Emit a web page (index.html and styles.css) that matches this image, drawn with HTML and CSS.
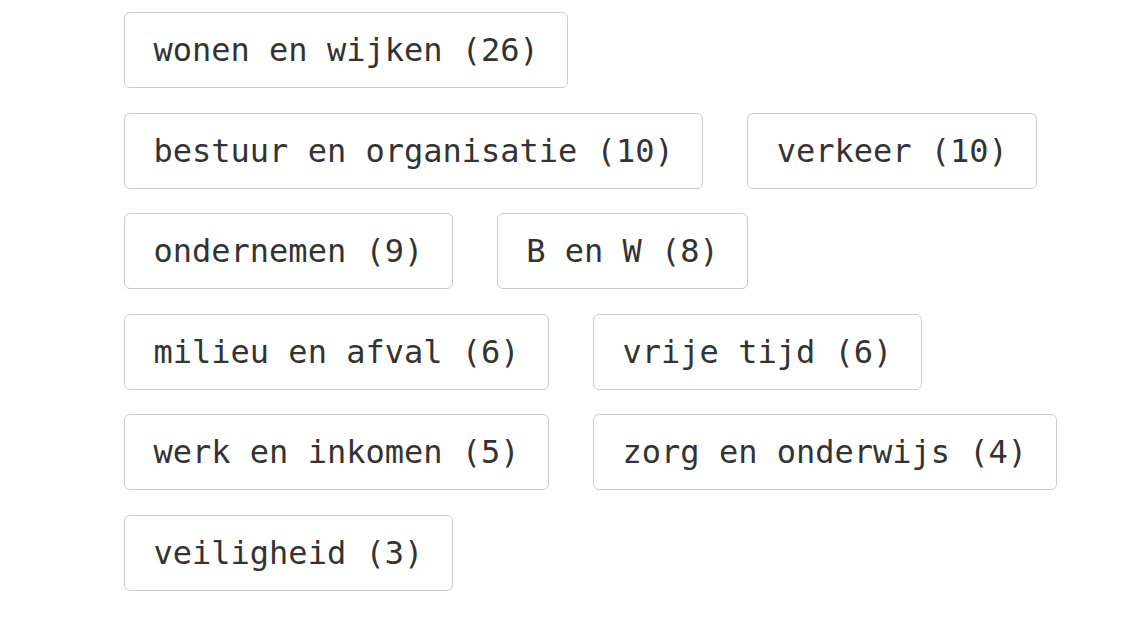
FILE: index.html
```html
<!DOCTYPE html>
<html lang="nl">
<head>
<meta charset="utf-8">
<title>Onderwerpen</title>
<link rel="stylesheet" href="styles.css">
</head>
<body>
<ul class="tags">
  <li><a class="tag" href="#">wonen en wijken (26)</a></li>
  <li><a class="tag" href="#">bestuur en organisatie (10)</a></li>
  <li><a class="tag" href="#">verkeer (10)</a></li>
  <li><a class="tag" href="#">ondernemen (9)</a></li>
  <li><a class="tag" href="#">B en W (8)</a></li>
  <li><a class="tag" href="#">milieu en afval (6)</a></li>
  <li><a class="tag" href="#">vrije tijd (6)</a></li>
  <li><a class="tag" href="#">werk en inkomen (5)</a></li>
  <li><a class="tag" href="#">zorg en onderwijs (4)</a></li>
  <li><a class="tag" href="#">veiligheid (3)</a></li>
</ul>
</body>
</html>
```
FILE: styles.css
```css
html, body {
  margin: 0;
  padding: 0;
  background: #ffffff;
}

.tags {
  list-style: none;
  margin: 0;
  padding: 12px 20px 0 124px;
  display: flex;
  flex-wrap: wrap;
  column-gap: 44px;
  row-gap: 24.6px;
  max-width: 1140px;
  box-sizing: border-box;
}

.tags li {
  display: block;
}

.tag {
  display: block;
  font-family: "DejaVu Sans Mono", "Liberation Mono", monospace;
  font-size: 32px;
  line-height: 38px;
  padding: 18px 28.5px;
  color: #333333;
  text-decoration: none;
  border: 1.5px solid #cdcdcd;
  border-radius: 6px;
  white-space: nowrap;
  background: #ffffff;
}
```
